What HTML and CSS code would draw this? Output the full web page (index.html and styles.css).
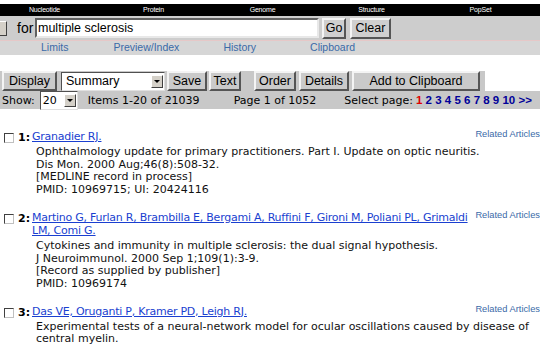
FILE: index.html
```html
<!DOCTYPE html>
<html lang="en">
<head>
    <meta charset="UTF-8">
    <title>PubMed - multiple sclerosis</title>
    <link rel="stylesheet" href="styles.css">
</head>
<body>
    <!-- Database bar -->
    <div class="dbbar">
        <span>Nucleotide</span>
        <span>Protein</span>
        <span>Genome</span>
        <span>Structure</span>
        <span>PopSet</span>
    </div>

    <!-- Search row -->
    <div class="searchrow">
        <span class="dbselect"><span class="arrow"></span></span>
        <span class="for">for</span>
        <span class="term">multiple sclerosis</span>
        <button class="btn go">Go</button>
        <button class="btn clear">Clear</button>
    </div>

    <!-- Feature links -->
    <div class="features">
        <a class="f-limits">Limits</a>
        <a class="f-preview">Preview/Index</a>
        <a class="f-history">History</a>
        <a class="f-clip">Clipboard</a>
    </div>

    <!-- Display toolbar -->
    <div class="toolbar">
        <button class="btn b-display">Display</button>
        <span class="select summary">Summary<span class="arrow"></span></span>
        <button class="btn b-save">Save</button>
        <button class="btn b-text">Text</button>
        <button class="btn b-order">Order</button>
        <button class="btn b-details">Details</button>
        <button class="btn b-clip">Add to Clipboard</button>
    </div>
    <div class="showrow">
        <span>Show:</span>
        <span class="select count">20<span class="arrow"></span></span>
        <span class="items">Items 1-20 of 21039</span>
        <span class="pageof">Page 1 of 1052</span>
        <span class="selpage">Select page:</span>
        <span class="pages"><b class="cur">1</b> <b>2</b> <b>3</b> <b>4</b> <b>5</b> <b>6</b> <b>7</b> <b>8</b> <b>9</b> <b>10</b> <b>&gt;&gt;</b></span>
    </div>

    <!-- Results -->
    <div class="results">
        <div class="doc">
            <div class="num"><span class="box"></span><b>1:</b></div>
            <div class="body">
                <a class="related">Related Articles</a>
                <a class="authors">Granadier RJ.</a>
                <div class="desc">
                    Ophthalmology update for primary practitioners. Part I. Update on optic neuritis.<br>
                    Dis Mon. 2000 Aug;46(8):508-32.<br>
                    [MEDLINE record in process]<br>
                    PMID: 10969715; UI: 20424116
                </div>
            </div>
        </div>

        <div class="doc">
            <div class="num"><span class="box"></span><b>2:</b></div>
            <div class="body">
                <a class="related">Related Articles</a>
                <a class="authors">Martino G, Furlan R, Brambilla E, Bergami A, Ruffini F, Gironi M, Poliani PL, Grimaldi LM, Comi G.</a>
                <div class="desc">
                    Cytokines and immunity in multiple sclerosis: the dual signal hypothesis.<br>
                    J Neuroimmunol. 2000 Sep 1;109(1):3-9.<br>
                    [Record as supplied by publisher]<br>
                    PMID: 10969174
                </div>
            </div>
        </div>

        <div class="doc">
            <div class="num"><span class="box"></span><b>3:</b></div>
            <div class="body">
                <a class="related">Related Articles</a>
                <a class="authors">Das VE, Oruganti P, Kramer PD, Leigh RJ.</a>
                <div class="desc">
                    Experimental tests of a neural-network model for ocular oscillations caused by disease of central myelin.
                </div>
            </div>
        </div>
    </div>
</body>
</html>
```

FILE: styles.css
```css
/* Page */
body {
    margin: 0;
    background: #fff;
    font-family: "Liberation Sans", Arial, sans-serif;
    color: #000;
    overflow: hidden;
}

/* Black database bar */
.dbbar {
    margin-top: 4px;
    height: 12px;
    background: #000;
    color: #fff;
    display: grid;
    grid-template-columns: repeat(5, 109px);
    margin-left: -10px;
    font-size: 7px;
    line-height: 12px;
    letter-spacing: -0.2px;
}
.dbbar span {
    text-align: center;
}

/* Search row */
.searchrow {
    height: 24px;
    background: #cdcdcd;
    display: flex;
    align-items: center;
}
.dbselect {
    width: 6px;
    height: 13px;
    background: #d4d0c8;
    border: 1px solid;
    border-color: #fff #404040 #404040 #fff;
    border-left: none;
}
.for {
    font-size: 14px;
    margin-left: 10px;
    width: 18px;
}
.term {
    width: 279px;
    height: 16px;
    background: #fff;
    border: 2px solid;
    border-color: #606060 #e8e8e8 #e8e8e8 #606060;
    font-size: 12.5px;
    line-height: 16px;
    padding-left: 1px;
}
.btn {
    font-family: "Liberation Sans", Arial, sans-serif;
    font-size: 12.5px;
    background: #cfcfcf;
    border: 2px solid;
    border-color: #f4f4f4 #555 #555 #f4f4f4;
    padding: 0;
    height: 21px;
    color: #000;
    flex-shrink: 0;
}
.go {
    margin-left: 3px;
    width: 24px;
}
.clear {
    margin-left: 4px;
    width: 41px;
}

/* Feature links */
.features {
    height: 14px;
    background: #d6d6d6;
    border-top: 1px solid #e6c8c8;
    display: flex;
    font-size: 10.5px;
    line-height: 13px;
}
.features a {
    color: #3a6aa8;
}
.f-limits { margin-left: 41px; }
.f-preview { margin-left: 45px; }
.f-history { margin-left: 44px; }
.f-clip { margin-left: 54px; }

/* Display toolbar */
.toolbar {
    margin-top: 16px;
    width: 485px;
    height: 20px;
    background: #c8c8c8;
    display: flex;
    align-items: center;
}
.toolbar .btn {
    height: 20px;
    font-size: 12.5px;
    background: #cacaca;
}
.b-display { margin-left: 2px; width: 55px; }
.summary { margin-left: 4px; width: 104px; }
.b-save { margin-left: 2px; width: 40px; }
.b-text { margin-left: 2px; width: 32px; }
.b-order { margin-left: 13px; width: 42px; }
.b-details { margin-left: 3px; width: 50px; }
.b-clip { margin-left: 3px; width: 128px; }

.select {
    position: relative;
    display: inline-block;
    flex-shrink: 0;
    height: 19px;
    background: #fff;
    border: 1px solid;
    border-color: #505050 #e0e0e0 #e0e0e0 #505050;
    font-size: 12.5px;
    line-height: 17px;
    padding-left: 4px;
    box-sizing: border-box;
}
.select .arrow {
    position: absolute;
    right: 1px;
    top: 2px;
    width: 12px;
    height: 13px;
    background: #d4d0c8;
    border: 1px solid;
    border-color: #fff #404040 #404040 #fff;
    box-sizing: border-box;
}
.arrow::after {
    content: "";
    position: absolute;
    left: 2px;
    top: 4px;
    border-left: 3px solid transparent;
    border-right: 3px solid transparent;
    border-top: 3px solid #000;
}

/* Show row */
.showrow {
    height: 18px;
    background: #c8c8c8;
    display: flex;
    align-items: center;
    font-family: "DejaVu Sans", Verdana, sans-serif;
    font-size: 11px;
    padding-left: 2px;
    white-space: nowrap;
}
.count {
    margin-left: 5px;
    width: 38px;
    font-family: "DejaVu Sans", Verdana, sans-serif;
    font-size: 11px;
    padding-left: 2px;
}
.items { margin-left: 10px; }
.pageof { margin-left: 34px; }
.selpage { margin-left: 28px; }
.pages {
    margin-left: 3px;
    color: #000099;
    font-family: "Liberation Sans", Arial, sans-serif;
    font-size: 11.5px;
}
.pages .cur { color: #e00000; }

/* Results */
.results {
    margin-top: 21px;
    font-family: "DejaVu Sans", Verdana, sans-serif;
    font-size: 11px;
}
.doc {
    display: flex;
    margin-bottom: 14px;
}
.num {
    width: 32px;
    flex-shrink: 0;
    display: flex;
    align-items: flex-start;
    padding-top: 2px;
}
.num b {
    margin-left: 4px;
    line-height: 12px;
}
.box {
    margin-left: 4px;
    margin-top: 1px;
    width: 8px;
    height: 8px;
    border: 1px solid;
    border-color: #404040 #c0c0c0 #c0c0c0 #404040;
    background: #fff;
}
.body {
    flex: 1;
}
.authors {
    color: #1a3fd0;
    text-decoration: underline;
    line-height: 13px;
    letter-spacing: -0.25px;
}
.desc {
    padding-left: 4px;
    padding-top: 3px;
    line-height: 12.7px;
    color: #111;
}
.related {
    float: right;
    margin-top: -2px;
    margin-left: 4px;
    font-family: "Liberation Sans", Arial, sans-serif;
    font-size: 9.3px;
    line-height: 13px;
    color: #3a6aa8;
    white-space: nowrap;
}
```
